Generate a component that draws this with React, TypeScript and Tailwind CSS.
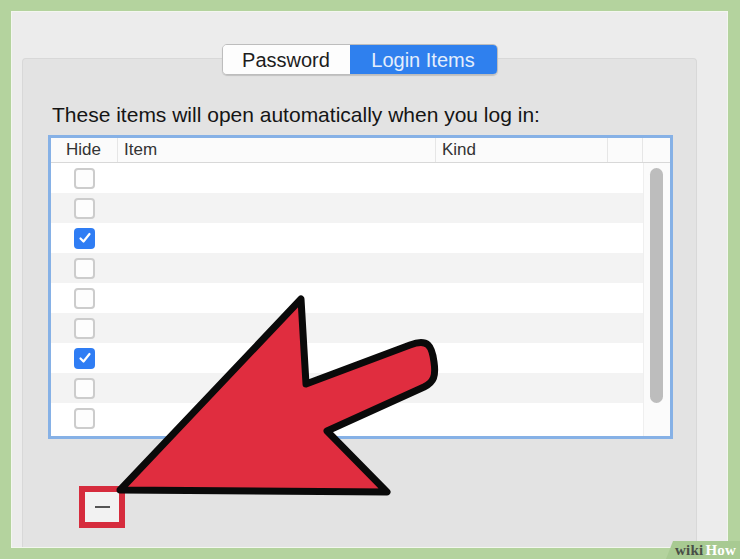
import React from "react";

const rows = [false, false, true, false, false, false, true, false, false];

function Checkbox({ checked }: { checked: boolean }) {
  if (checked) {
    return (
      <div className="w-[21px] h-[21px] rounded-[4px] bg-[#2f7df4] flex items-center justify-center">
        <svg width="14" height="14" viewBox="0 0 14 14">
          <path d="M2.5 7.5 L5.5 10.5 L11.5 3" fill="none" stroke="#ffffff" strokeWidth="2.2" strokeLinecap="round" strokeLinejoin="round" />
        </svg>
      </div>
    );
  }
  return <div className="w-[21px] h-[21px] rounded-[4px] border-2 border-[#cccccc] bg-[#fdfdfd]" />;
}

export default function App() {
  return (
    <div
      className="relative w-[740px] h-[559px] bg-[#b4d39e] pt-[11px] pl-[11px] pr-[12px] pb-[11px] overflow-hidden"
      style={{ fontFamily: '"Liberation Sans", Arial, sans-serif' }}
    >
      <div className="h-full bg-[#ececec] border border-[#f3f6ef] pl-[10px] pr-[30px] pt-[32px] flex flex-col">
        {/* segmented control */}
        <div className="self-center relative z-10 -mb-[17px] flex h-[31px] rounded-[5px] border border-[#bdbdbd] shadow-[0_1px_1px_rgba(0,0,0,0.15)] overflow-hidden">
          <div className="w-[127px] bg-[#fdfdfd] flex items-center justify-center text-[20px] text-[#1c1c1c]">
            Password
          </div>
          <div className="w-[147px] bg-[#2f80ee] flex items-center justify-center text-[20px] text-[#e4eefc]">
            Login Items
          </div>
        </div>

        {/* group box */}
        <div className="flex-1 bg-[#e3e3e3] border-t border-x border-[#d8d8d8] rounded-t-[4px] pl-[25px] pr-[23px] pt-[44px] flex flex-col">
          <div className="ml-[4px] text-[21px] leading-[24px] text-[#151515] whitespace-nowrap">
            These items will open automatically when you log in:
          </div>

          {/* table */}
          <div className="mt-[8px] h-[304px] border-[3px] border-[#86b1e6] bg-white flex flex-col overflow-hidden">
            <div className="h-[25px] shrink-0 flex items-center border-b border-[#d8d8d8] bg-[#fbfbfb] text-[17px] text-[#333]">
              <div className="w-[67px] pl-[15px] h-full flex items-center border-r border-[#e6e6e6]">Hide</div>
              <div className="w-[318px] pl-[6px] h-full flex items-center border-r border-[#e6e6e6]">Item</div>
              <div className="w-[172px] pl-[6px] h-full flex items-center border-r border-[#e6e6e6]">Kind</div>
              <div className="w-[35px] h-full border-r border-[#e6e6e6]" />
              <div className="flex-1 h-full" />
            </div>
            <div className="flex-1 flex min-h-0">
              <div className="w-[592px] flex flex-col">
                {rows.map((c, i) => (
                  <div
                    key={i}
                    className={`h-[30px] shrink-0 flex items-center pl-[23px] ${i % 2 === 1 ? "bg-[#f3f3f3]" : "bg-white"}`}
                  >
                    <Checkbox checked={c} />
                  </div>
                ))}
              </div>
              <div className="flex-1 bg-[#fbfbfb] border-l border-[#efefef]">
                <div className="mt-[5px] ml-[6px] w-[13px] h-[235px] rounded-full bg-[#bdbdbd]" />
              </div>
            </div>
          </div>

          {/* minus button */}
          <div className="mt-[47px] ml-[31px] w-[46px] h-[42px] border-[6px] border-[#d62c3d] bg-[#f2f2f2] flex items-center justify-center">
            <div className="w-[15px] h-[2px] bg-[#555]" />
          </div>
        </div>
      </div>

      {/* arrow annotation */}
      <svg className="absolute left-0 top-0 pointer-events-none" width="740" height="559" viewBox="0 0 740 559">
        <path
          d="M120 490 L301 299 L306 384 L410 345 C428 338 432 346 434 362 C436 376 434 382 424 387 L327 431 L387 492 Z"
          fill="#e02d3f"
          stroke="#0a0a0a"
          strokeWidth="7"
          strokeLinejoin="round"
        />
      </svg>

      {/* wikiHow tab */}
      <div
        className="absolute right-0 bottom-0 h-[18px] w-[74px] bg-[#a8ca92] flex items-center justify-end pr-[4px]"
        style={{ clipPath: "polygon(7px 0, 100% 0, 100% 100%, 0 100%)" }}
      >
        <span className="text-[15px] font-bold leading-none tracking-[0.2px]" style={{ fontFamily: '"Liberation Serif", "DejaVu Serif", serif' }}>
          <span className="text-[#4a4f47]">wiki</span>
          <span className="text-white ml-[2px]">How</span>
        </span>
      </div>
    </div>
  );
}
